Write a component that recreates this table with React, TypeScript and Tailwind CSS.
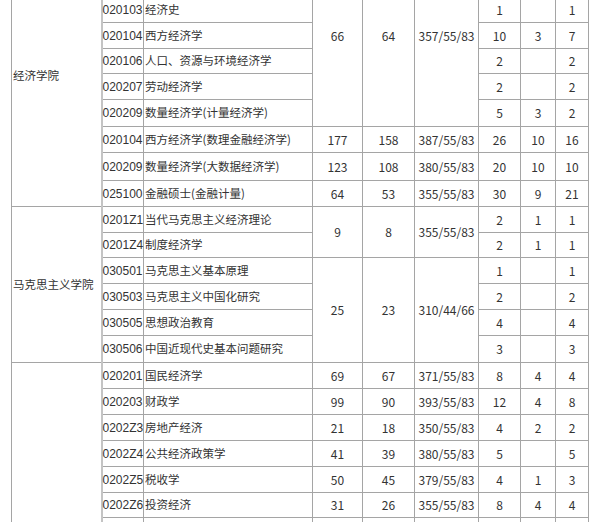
type Row = {
  h: string;
  code: string;
  name: string;
  college?: { label: string; span: number };
  score?: { plan: string; admit: string; line: string; span: number };
  total: string;
  push: string;
  exam: string;
};

// first two rows sit above the visible crop
const rows: Row[] = [
  { h: "h-[26px]", code: "020101", name: "政治经济学", college: { label: "经济学院", span: 10 }, score: { plan: "66", admit: "64", line: "357/55/83", span: 7 }, total: "3", push: "1", exam: "2" },
  { h: "h-[26px]", code: "020102", name: "经济思想史", total: "1", push: "", exam: "1" },
  { h: "h-[26px]", code: "020103", name: "经济史", total: "1", push: "", exam: "1" },
  { h: "h-[26px]", code: "020104", name: "西方经济学", total: "10", push: "3", exam: "7" },
  { h: "h-[25px]", code: "020106", name: "人口、资源与环境经济学", total: "2", push: "", exam: "2" },
  { h: "h-[26px]", code: "020207", name: "劳动经济学", total: "2", push: "", exam: "2" },
  { h: "h-[27px]", code: "020209", name: "数量经济学(计量经济学)", total: "5", push: "3", exam: "2" },
  { h: "h-[26px]", code: "020104", name: "西方经济学(数理金融经济学)", score: { plan: "177", admit: "158", line: "387/55/83", span: 1 }, total: "26", push: "10", exam: "16" },
  { h: "h-[28px]", code: "020209", name: "数量经济学(大数据经济学)", score: { plan: "123", admit: "108", line: "380/55/83", span: 1 }, total: "20", push: "10", exam: "10" },
  { h: "h-[26px]", code: "025100", name: "金融硕士(金融计量)", score: { plan: "64", admit: "53", line: "355/55/83", span: 1 }, total: "30", push: "9", exam: "21" },
  { h: "h-[26px]", code: "0201Z1", name: "当代马克思主义经济理论", college: { label: "马克思主义学院", span: 6 }, score: { plan: "9", admit: "8", line: "355/55/83", span: 2 }, total: "2", push: "1", exam: "1" },
  { h: "h-[25px]", code: "0201Z4", name: "制度经济学", total: "2", push: "1", exam: "1" },
  { h: "h-[26px]", code: "030501", name: "马克思主义基本原理", score: { plan: "25", admit: "23", line: "310/44/66", span: 4 }, total: "1", push: "", exam: "1" },
  { h: "h-[26px]", code: "030503", name: "马克思主义中国化研究", total: "2", push: "", exam: "2" },
  { h: "h-[26px]", code: "030505", name: "思想政治教育", total: "4", push: "", exam: "4" },
  { h: "h-[27px]", code: "030506", name: "中国近现代史基本问题研究", total: "3", push: "", exam: "3" },
  { h: "h-[26px]", code: "020201", name: "国民经济学", college: { label: "", span: 8 }, score: { plan: "69", admit: "67", line: "371/55/83", span: 1 }, total: "8", push: "4", exam: "4" },
  { h: "h-[26px]", code: "020203", name: "财政学", score: { plan: "99", admit: "90", line: "393/55/83", span: 1 }, total: "12", push: "4", exam: "8" },
  { h: "h-[26px]", code: "0202Z3", name: "房地产经济", score: { plan: "21", admit: "18", line: "350/55/83", span: 1 }, total: "4", push: "2", exam: "2" },
  { h: "h-[26px]", code: "0202Z4", name: "公共经济政策学", score: { plan: "41", admit: "39", line: "380/55/83", span: 1 }, total: "5", push: "", exam: "5" },
  { h: "h-[26px]", code: "0202Z5", name: "税收学", score: { plan: "50", admit: "45", line: "379/55/83", span: 1 }, total: "4", push: "1", exam: "3" },
  { h: "h-[25px]", code: "0202Z6", name: "投资经济", score: { plan: "31", admit: "26", line: "355/55/83", span: 1 }, total: "8", push: "4", exam: "4" },
  { h: "h-[26px]", code: "020204", name: "金融学", score: { plan: "88", admit: "80", line: "380/55/83", span: 1 }, total: "6", push: "2", exam: "4" },
  { h: "h-[26px]", code: "020205", name: "产业经济学", score: { plan: "40", admit: "36", line: "360/55/83", span: 1 }, total: "4", push: "1", exam: "3" },
];

const cell = "border border-[#a5a5a5] p-0 align-middle";

export default function App() {
  return (
    <div className="h-[522px] w-[600px] overflow-hidden bg-white">
      <table className="ml-[11px] mt-[-56px] w-[577px] table-fixed border-collapse font-['Noto_Sans_CJK_SC',sans-serif] text-[12px] leading-none text-[#333333]">
        <colgroup>
          <col className="w-[90px]" />
          <col className="w-[42px]" />
          <col className="w-[169px]" />
          <col className="w-[50px]" />
          <col className="w-[52px]" />
          <col className="w-[64px]" />
          <col className="w-[42px]" />
          <col className="w-[35px]" />
          <col className="w-[33px]" />
        </colgroup>
        <tbody>
          {rows.map((r, i) => (
            <tr key={i} className={r.h}>
              {r.college && (
                <td rowSpan={r.college.span} className={`${cell} pl-[1px] text-left text-[11.5px]`}>
                  {r.college.label}
                </td>
              )}
              <td className={`${cell} whitespace-nowrap border-l-2 border-l-[#c4c4c4] text-left font-['Liberation_Sans',sans-serif] text-[12px]`}>{r.code}</td>
              <td className={`${cell} whitespace-nowrap pl-[1px] text-left text-[11.5px]`}>{r.name}</td>
              {r.score && (
                <>
                  <td rowSpan={r.score.span} className={`${cell} text-center`}>{r.score.plan}</td>
                  <td rowSpan={r.score.span} className={`${cell} text-center`}>{r.score.admit}</td>
                  <td rowSpan={r.score.span} className={`${cell} text-center`}>{r.score.line}</td>
                </>
              )}
              <td className={`${cell} text-center`}>{r.total}</td>
              <td className={`${cell} text-center`}>{r.push}</td>
              <td className={`${cell} text-center`}>{r.exam}</td>
            </tr>
          ))}
        </tbody>
      </table>
    </div>
  );
}
